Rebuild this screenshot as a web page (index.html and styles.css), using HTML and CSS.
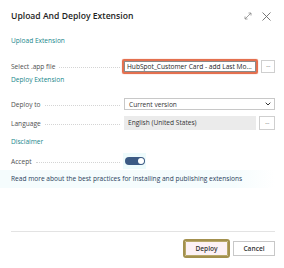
FILE: index.html
```
<!DOCTYPE html>
<html>
<head>
<meta charset="utf-8">
<link rel="stylesheet" href="styles.css">
</head>
<body>
<div class="dialog">
  <div class="header">
    <div class="title">Upload And Deploy Extension</div>
    <div class="hicons">
      <svg class="ico-expand" width="8" height="8" viewBox="0 0 8 8"><path d="M1 7 L7 1 M4.5 1 H7 V3.5 M1 4.5 V7 H3.5" fill="none" stroke="#8a8a8a" stroke-width="0.8"/></svg>
      <svg class="ico-close" width="9" height="9" viewBox="0 0 9 9"><path d="M0.5 0.5 L8.5 8.5 M8.5 0.5 L0.5 8.5" fill="none" stroke="#6a6a6a" stroke-width="0.9"/></svg>
    </div>
  </div>
  <div class="cap cap1">Upload Extension</div>
  <div class="row row-file">
    <div class="label">Select .app file</div>
    <div class="ctrl">
      <div class="file-outline"><div class="file-input">HubSpot_Customer Card - add Last Mo...</div></div>
      <div class="dots">···</div>
    </div>
  </div>
  <div class="cap cap2">Deploy Extension</div>
  <div class="row row-deploy">
    <div class="label">Deploy to</div>
    <div class="ctrl">
      <div class="select"><span>Current version</span>
        <svg width="6" height="4" viewBox="0 0 6 4"><path d="M0.7 0.7 L3 3 L5.3 0.7" fill="none" stroke="#333" stroke-width="1"/></svg>
      </div>
    </div>
  </div>
  <div class="row row-lang">
    <div class="label">Language</div>
    <div class="ctrl">
      <div class="ro-input">English (United States)</div>
      <div class="dots">···</div>
    </div>
  </div>
  <div class="cap cap3">Disclaimer</div>
  <div class="row row-accept">
    <div class="label">Accept</div>
    <div class="ctrl">
      <div class="toggle-wrap"><div class="toggle"><div class="knob"></div></div></div>
    </div>
  </div>
  <div class="readmore">Read more about the best practices for installing and publishing extensions</div>
  <div class="spacer"></div>
  <div class="footer">
    <div class="btn btn-primary">Deploy</div>
    <div class="btn">Cancel</div>
  </div>
</div>
</body>
</html>
```
FILE: styles.css
```
html, body {
  margin: 0;
  padding: 0;
  background: #ffffff;
}
body {
  font-family: "Open Sans", "Noto Sans", sans-serif;
  font-size: 6.6px;
  color: #505050;
}
.dialog {
  width: 284px;
  height: 268px;
  box-sizing: border-box;
  padding: 0 9px 0 11px;
  display: flex;
  flex-direction: column;
}
.header {
  height: 32px;
  flex: none;
  display: flex;
  align-items: center;
  justify-content: space-between;
}
.title {
  font-size: 8.6px;
  font-weight: 600;
  color: #1e1e1e;
}
.hicons {
  display: flex;
  align-items: center;
  gap: 10px;
  margin-right: 4px;
}
.cap {
  color: #17878c;
  flex: none;
}
.cap1 { height: 18px; line-height: 18px; }
.cap2 { height: 8px; line-height: 8px; }
.cap3 { height: 18px; line-height: 18px; margin-top: 1px; }
.row {
  display: flex;
  align-items: center;
  flex: none;
  height: 18px;
}
.row-file { margin-top: 6px; height: 20px; }
.row-deploy { margin-top: 11px; }
.row-lang { margin-top: 1px; }
.row-accept { margin-top: 1px; }
.label {
  width: 113px;
  flex: none;
  display: flex;
  align-items: center;
  white-space: nowrap;
}
.label::after {
  content: "";
  flex: 1;
  margin: 3px 4px 0 4px;
  border-bottom: 1px dotted #d4d4d4;
}
.ctrl {
  flex: 1;
  display: flex;
  align-items: center;
}
.file-outline {
  width: 132px;
  height: 11px;
  border: 2px solid #e4704f;
  border-radius: 2px;
  margin-left: -2px;
  box-shadow: 0 0 1px #e4704f;
}
.file-input {
  height: 11px;
  line-height: 10px;
  padding: 0 2px;
  box-sizing: border-box;
  border: 1px solid #8a8a8a;
  color: #1e1e1e;
  white-space: nowrap;
  overflow: hidden;
}
.dots {
  width: 14px;
  height: 13px;
  box-sizing: border-box;
  border: 1px solid #cfcfcf;
  margin-left: 3px;
  display: flex;
  align-items: center;
  justify-content: center;
  color: #777;
  font-size: 7px;
  line-height: 1;
  letter-spacing: -0.5px;
}
.row-lang .dots { width: 16px; height: 14px; }
.select {
  width: 151px;
  height: 12px;
  box-sizing: border-box;
  border: 1px solid #c8c8c8;
  display: flex;
  align-items: center;
  justify-content: space-between;
  padding: 0 3px 0 4px;
  color: #333;
}
.ro-input {
  width: 132px;
  height: 14px;
  box-sizing: border-box;
  background: #ebebeb;
  line-height: 14px;
  padding: 0 4px;
  color: #333;
}
.toggle-wrap {
  background: #eefbfc;
  padding: 4px 1px 4px 2px;
  margin-left: -1px;
}
.toggle {
  width: 20px;
  height: 8px;
  border-radius: 4px;
  background: #3c5a84;
  display: flex;
  align-items: center;
  justify-content: flex-end;
  padding-right: 1px;
  box-sizing: border-box;
}
.knob {
  width: 6px;
  height: 6px;
  border-radius: 50%;
  background: #ffffff;
}
.readmore {
  height: 18px;
  line-height: 18px;
  flex: none;
  color: #2b3f5c;
  background: linear-gradient(90deg, #f5fcfd 0%, #f5fcfd 85%, #ffffff 100%);
  margin-left: -11px;
  padding-left: 11px;
}
.spacer { flex: 1; }
.footer {
  flex: none;
  border-top: 1px solid #e3e3e3;
  padding: 9px 0 12px;
  display: flex;
  justify-content: flex-end;
  gap: 4px;
}
.btn {
  height: 15px;
  box-sizing: border-box;
  border: 1px solid #c8c8c8;
  padding: 0 7px;
  line-height: 13px;
  color: #333;
  font-weight: 600;
  background: #fff;
  width: 42px;
  text-align: center;
}
.btn-primary {
  width: 43px;
  background: #fcf1f5;
  border: 1px solid #b8a86a;
  outline: 2px solid #a3904e;
  outline-offset: 0;
  border-radius: 1px;
  margin-right: 1px;
}
```
